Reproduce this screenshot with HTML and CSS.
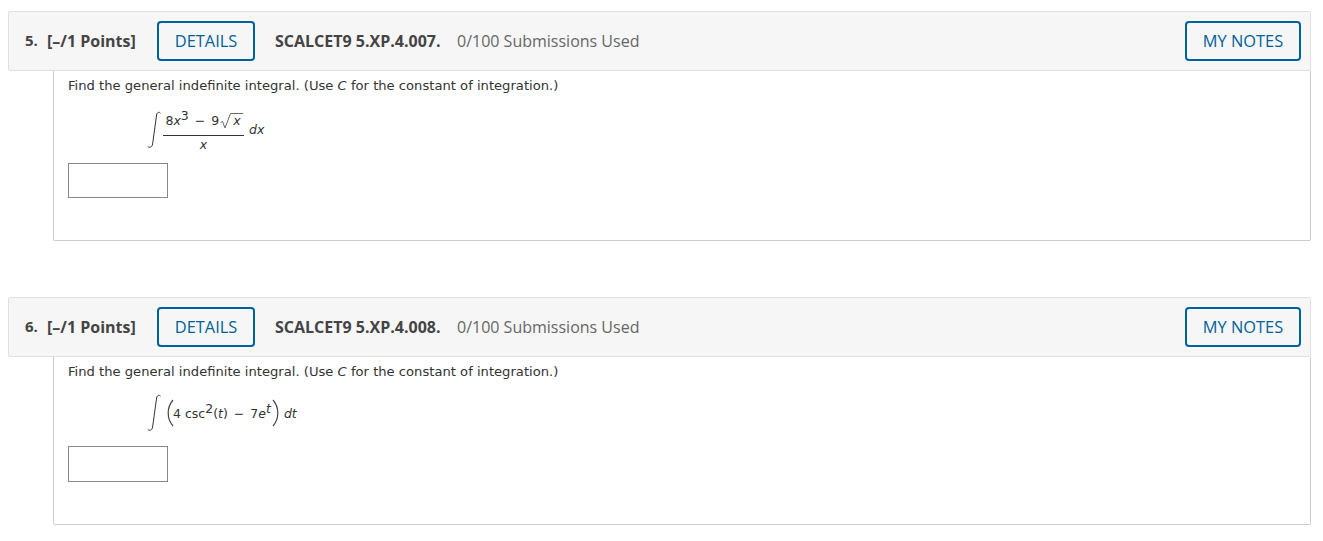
FILE: index.html
```html
<!DOCTYPE html>
<html lang="en">
<head>
<meta charset="utf-8">
<title>Questions</title>
<link rel="stylesheet" href="styles.css">
</head>
<body>
<section class="question">
  <header class="qhead">
    <span class="num">5.</span>
    <span class="points">[–/1 Points]</span>
    <button class="btn details">DETAILS</button>
    <span class="code">SCALCET9 5.XP.4.007.</span>
    <span class="subs">0/100 Submissions Used</span>
    <button class="btn notes">MY NOTES</button>
  </header>
  <div class="qbody">
    <p class="prompt">Find the general indefinite integral. (Use <i>C</i> for the constant of integration.)</p>
    <div class="math m1">
      <svg class="integral" width="14" height="38" viewBox="0 0 14 38"><path d="M13.5 2.2C12.2 .6 10.2 1 9.6 4L5.6 33C5 36.5 2.4 37 .8 35.5" fill="none" stroke="#333" stroke-width="1"/></svg>
      <div class="frac">
        <div class="numer">8<i>x</i><sup>3</sup><span class="minus">−</span>9<svg class="root" width="12" height="16" viewBox="0 0 12 16"><path d="M.5 9.5L2.5 8.5L5 15L10.5 .5H12" fill="none" stroke="#666" stroke-width="1"/></svg><i class="radicand">x</i></div>
        <div class="denom"><i>x</i></div>
      </div>
      <span class="dx"><i>dx</i></span>
    </div>
    <input class="answer" type="text" aria-label="Answer">
  </div>
</section>
<section class="question second">
  <header class="qhead">
    <span class="num">6.</span>
    <span class="points">[–/1 Points]</span>
    <button class="btn details">DETAILS</button>
    <span class="code">SCALCET9 5.XP.4.008.</span>
    <span class="subs">0/100 Submissions Used</span>
    <button class="btn notes">MY NOTES</button>
  </header>
  <div class="qbody body2">
    <p class="prompt">Find the general indefinite integral. (Use <i>C</i> for the constant of integration.)</p>
    <div class="math m2">
      <svg class="integral" width="14" height="38" viewBox="0 0 14 38"><path d="M13.5 2.2C12.2 .6 10.2 1 9.6 4L5.6 33C5 36.5 2.4 37 .8 35.5" fill="none" stroke="#333" stroke-width="1"/></svg>
      <svg class="paren open" width="7" height="28" viewBox="0 0 7 28"><path d="M6 1C2.5 5 1.2 9.500 1.200 14S2.500 23 6 27" fill="none" stroke="#444" stroke-width="1.200"/></svg>
      <span class="expr">4 csc<sup>2</sup>(<i>t</i>)<span class="minus">−</span>7<i>e</i><sup><i>t</i></sup></span>
      <svg class="paren" width="7" height="28" viewBox="0 0 7 28"><path d="M1 1C4.500 5 5.800 9.500 5.800 14S4.500 23 1 27" fill="none" stroke="#444" stroke-width="1.200"/></svg>
      <span class="dt"><i>dt</i></span>
    </div>
    <input class="answer tall" type="text" aria-label="Answer">
  </div>
</section>
</body>
</html>
```
FILE: styles.css
```css
* { box-sizing: border-box; }
html, body { margin: 0; padding: 0; background: #fff; }
body { padding: 11px 12px 0 8px; }
.second { margin-top: 56px; }
.qhead {
  display: flex;
  align-items: center;
  height: 60px;
  padding: 0 9px 0 16px;
  background: #f6f6f6;
  border: 1px solid #e0e0e0;
  border-radius: 2px;
  font-family: "Open Sans", sans-serif;
  font-size: 16px;
  color: #555;
}
.num { font-weight: 700; font-size: 15px; color: #444; width: 22px; position: relative; top: -1px; }
.points { font-weight: 700; font-size: 16px; color: #444; width: 110px; }
.btn {
  height: 40px;
  background: transparent;
  border: 2px solid #00629b;
  border-radius: 4px;
  color: #00629b;
  font-family: "Open Sans", sans-serif;
  font-size: 16.4px;
  padding: 0 0 1px;
}
.details { width: 98px; margin-right: 20px; }
.code { font-weight: 700; color: #444; width: 182px; font-size: 16px; }
.subs { color: #666; }
.notes { width: 116px; margin-left: auto; }
.qbody {
  height: 170px;
  margin-left: 45px;
  padding: 0 14px;
  background: #fff;
  border: 1px solid #ccc;
  border-top: 0;
  border-radius: 0 0 2px 2px;
  font-family: "DejaVu Sans", Verdana, sans-serif;
  font-size: 13px;
  color: #333;
}
.body2 { height: 168px; }
.prompt { margin: 0; padding-top: 7px; line-height: 16px; font-size: 13.13px; }
.math { display: flex; align-items: center; margin-left: 79px; font-size: 12.5px; }
.m1 { margin-top: 8px; height: 56px; }
.m2 { margin-top: 8px; height: 50px; }
.integral { flex: none; margin-right: 2px; }
.frac { width: 81px; text-align: center; }
.numer { height: 30px; border-bottom: 1px solid #333; padding: 7px 0 0 1px; white-space: nowrap; line-height: 14px; }
sup { font-size: 12.5px; line-height: 0; vertical-align: 5px; }
.minus { margin: 0 6px; }
.root { margin-left: 1px; vertical-align: -4px; }
.radicand { display: inline-block; border-top: 1px solid #666; line-height: 13px; padding: 0 2px 0 1px; vertical-align: 0; }
.denom { height: 18px; line-height: 18px; }
.dx { margin-left: 5px; font-size: 12.5px; position: relative; top: -1px; }
.open { margin-left: 4px; }
.expr { white-space: nowrap; margin: 0 1px 0 -1px; }
.dt { margin-left: 5px; font-size: 12.5px; }
.answer {
  display: block;
  width: 100px;
  height: 35px;
  padding: 0;
  background: #fff;
  border: 1px solid #888;
  border-radius: 0;
}
.m1 + .answer { margin-top: 5px; }
.m2 + .answer { margin-top: 8px; }
.tall { height: 36px; }
```
